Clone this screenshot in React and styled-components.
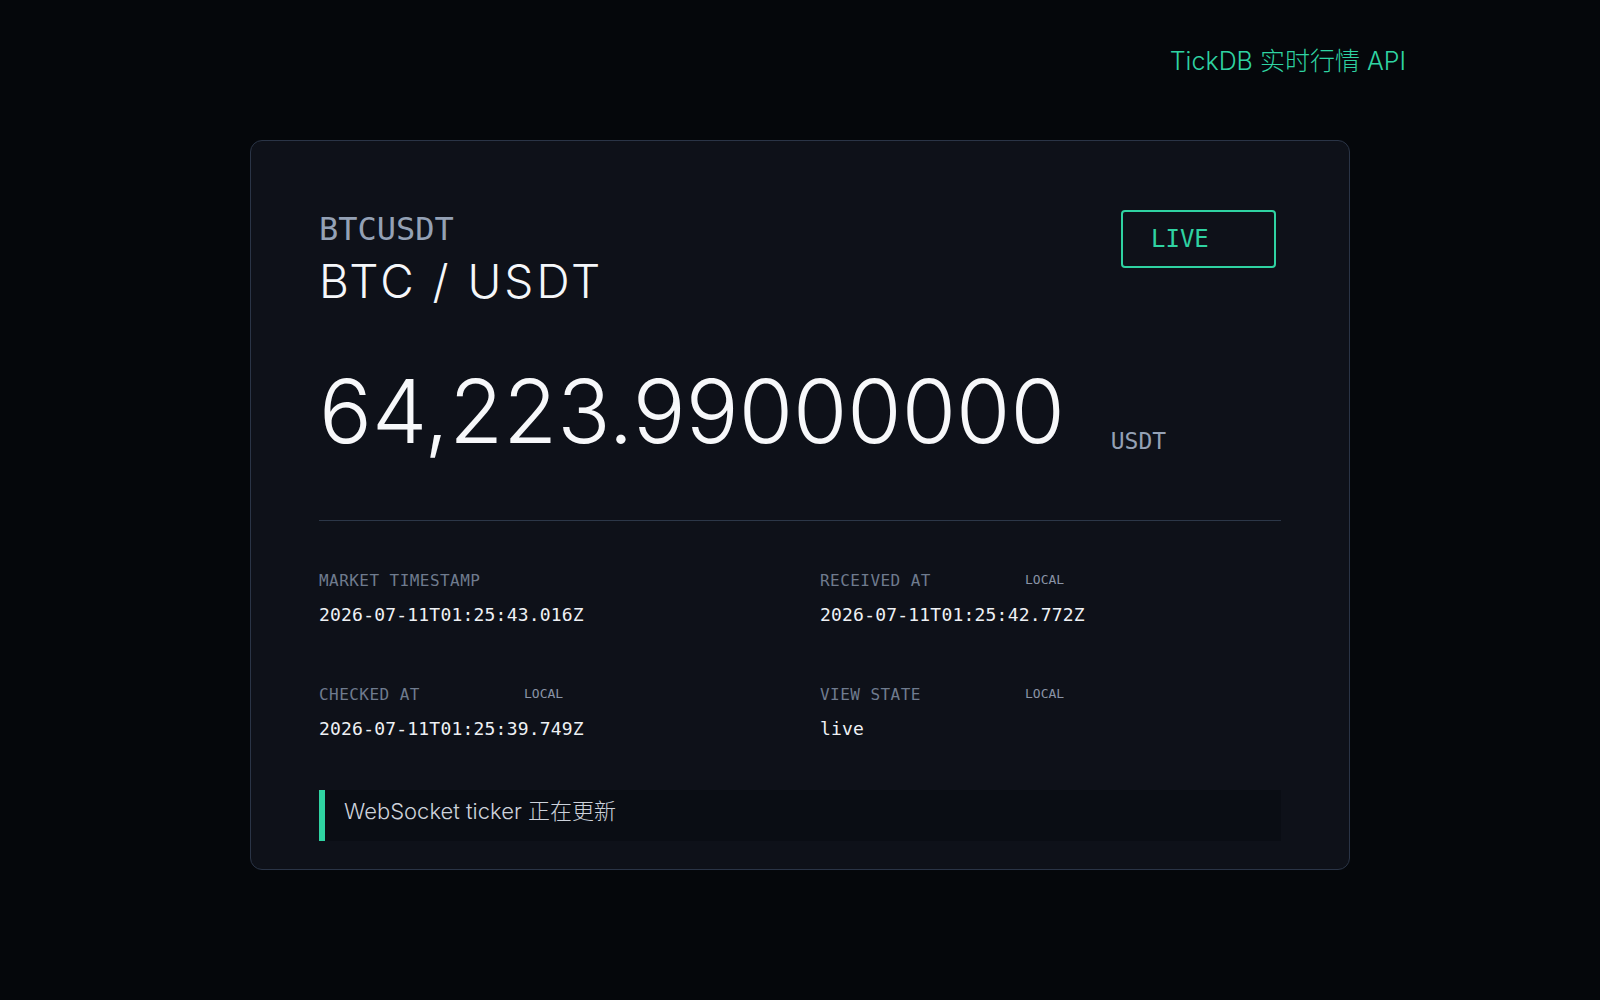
import styled, { createGlobalStyle } from 'styled-components';

const GlobalStyle = createGlobalStyle`
  body {
    margin: 0;
    background: #05070b;
    font-family: Inter, "Noto Sans CJK SC", sans-serif;
  }
`;

const mono = `"DejaVu Sans Mono", "Liberation Mono", monospace`;
const green = '#2fd3a2';

const rows = [
  [
    { label: 'MARKET TIMESTAMP', value: '2026-07-11T01:25:43.016Z' },
    { label: 'RECEIVED AT', local: true, value: '2026-07-11T01:25:42.772Z' },
  ],
  [
    { label: 'CHECKED AT', local: true, value: '2026-07-11T01:25:39.749Z' },
    { label: 'VIEW STATE', local: true, value: 'live' },
  ],
];

function App() {
  return (
    <Page>
      <GlobalStyle />
      <TopBar>
        <Brand>TickDB 实时行情 API</Brand>
      </TopBar>
      <Card>
        <Header>
          <div>
            <Symbol>BTCUSDT</Symbol>
            <Pair>BTC / USDT</Pair>
          </div>
          <LiveBadge>LIVE</LiveBadge>
        </Header>
        <PriceRow>
          <Price>64,223.99000000</Price>
          <Unit>USDT</Unit>
        </PriceRow>
        <Divider />
        <Details>
          {rows.flat().map((f) => (
            <Field key={f.label}>
              <LabelRow>
                <Label>{f.label}</Label>
                {f.local && <LocalTag>LOCAL</LocalTag>}
              </LabelRow>
              <Value>{f.value}</Value>
            </Field>
          ))}
        </Details>
        <Status>WebSocket ticker 正在更新</Status>
      </Card>
    </Page>
  );
}

const Page = styled.div`
  min-height: 100vh;
  display: flex;
  flex-direction: column;
  align-items: center;
`;

const TopBar = styled.div`
  box-sizing: border-box;
  width: 100%;
  display: flex;
  justify-content: flex-end;
  padding: 45px 194px 0;
`;

const Brand = styled.div`
  font-size: 25px;
  line-height: 32px;
  font-weight: 300;
  color: ${green};
`;

const Card = styled.div`
  box-sizing: border-box;
  width: 1100px;
  margin-top: 63px;
  padding: 68px 68px 28px;
  background: #0e1119;
  border: 1px solid #2a3446;
  border-radius: 12px;
`;

const Header = styled.div`
  display: flex;
  justify-content: space-between;
  align-items: flex-start;
`;

const Symbol = styled.div`
  font-family: ${mono};
  font-size: 32px;
  line-height: 40px;
  color: #94a1b5;
`;

const Pair = styled.div`
  margin-top: 5px;
  font-size: 46px;
  line-height: 55px;
  font-weight: 300;
  letter-spacing: 3px;
  color: #f5f7fa;
`;

const LiveBadge = styled.div`
  box-sizing: border-box;
  width: 155px;
  height: 58px;
  margin: 1px 5px 0 0;
  padding-left: 28px;
  display: flex;
  align-items: center;
  border: 2px solid ${green};
  border-radius: 4px;
  font-family: ${mono};
  font-size: 24px;
  color: ${green};
`;

const PriceRow = styled.div`
  margin-top: 58px;
  display: flex;
  align-items: flex-end;
  gap: 46px;
`;

const Price = styled.div`
  font-size: 88px;
  line-height: 88px;
  font-weight: 300;
  color: #f7f8fa;
`;

const Unit = styled.div`
  font-family: ${mono};
  font-size: 23px;
  line-height: 28px;
  color: #94a1b5;
`;

const Divider = styled.div`
  margin-top: 65px;
  height: 1px;
  background: #2c3748;
`;

const Details = styled.div`
  margin-top: 50px;
  display: grid;
  grid-template-columns: 1fr 1fr;
  column-gap: 40px;
  row-gap: 58px;
`;

const Field = styled.div`
  display: flex;
  flex-direction: column;
  gap: 12px;
`;

const LabelRow = styled.div`
  display: grid;
  grid-template-columns: 205px auto;
  align-items: center;
`;

const Label = styled.div`
  font-family: ${mono};
  font-size: 16px;
  line-height: 20px;
  letter-spacing: 0.45px;
  color: #6f7b8e;
`;

const LocalTag = styled.span`
  justify-self: start;
  margin-bottom: 3px;
  font-family: ${mono};
  font-size: 13px;
  line-height: 16px;
  color: #8a94a6;
`;

const Value = styled.div`
  font-family: ${mono};
  font-size: 18px;
  line-height: 24px;
  letter-spacing: 0.2px;
  color: #eef1f5;
`;

const Status = styled.div`
  box-sizing: border-box;
  height: 51px;
  margin-top: 49px;
  padding: 6px 0 0 19px;
  background: #0a0d14;
  border-left: 6px solid ${green};
  font-size: 22px;
  line-height: 30px;
  font-weight: 300;
  color: #cdd2db;
`;

export default App;
